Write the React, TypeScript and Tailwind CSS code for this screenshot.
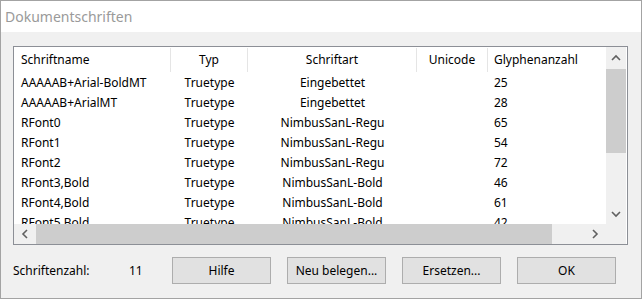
import React from 'react';

const rows = [
  ['AAAAAB+Arial-BoldMT', 'Truetype', 'Eingebettet', '', '25'],
  ['AAAAAB+ArialMT', 'Truetype', 'Eingebettet', '', '28'],
  ['RFont0', 'Truetype', 'NimbusSanL-Regu', '', '65'],
  ['RFont1', 'Truetype', 'NimbusSanL-Regu', '', '54'],
  ['RFont2', 'Truetype', 'NimbusSanL-Regu', '', '72'],
  ['RFont3,Bold', 'Truetype', 'NimbusSanL-Bold', '', '46'],
  ['RFont4,Bold', 'Truetype', 'NimbusSanL-Bold', '', '61'],
  ['RFont5,Bold', 'Truetype', 'NimbusSanL-Bold', '', '42'],
];

const Chevron = ({ dir }: { dir: 'up' | 'down' | 'left' | 'right' }) => {
  const d = {
    up: 'M1 6 L5 2 L9 6',
    down: 'M1 2 L5 6 L9 2',
    left: 'M6 1 L2 5 L6 9',
    right: 'M2 1 L6 5 L2 9',
  }[dir];
  const vertical = dir === 'up' || dir === 'down';
  return (
    <svg width={vertical ? 10 : 8} height={vertical ? 8 : 10} viewBox={vertical ? '0 0 10 8' : '0 0 8 10'}>
      <path d={d} fill="none" stroke="#606060" strokeWidth="1.6" />
    </svg>
  );
};

const Button = ({ label }: { label: string }) => (
  <button className="flex h-[27px] w-[99px] items-center justify-center border border-[#adadad] bg-[#e1e1e1] text-[12px] text-black">
    {label}
  </button>
);

const App = () => {
  return (
    <div className="flex h-[299px] w-[642px] flex-col border border-[#a3a3a3] bg-[#f0f0f0] font-['Noto_Sans',sans-serif] text-[12px] text-black">
      <div className="flex h-[31px] items-center bg-white pl-[4px] text-[14px] text-[#9a9a9a]">
        Dokumentschriften
      </div>

      <div className="pl-[12px] pr-[13px] pt-[14px]">
        <div className="flex h-[199px] w-[615px] border border-[#8c8f96] bg-white">
          <div className="flex w-[592px] flex-col">
            <div className="h-[177px] overflow-hidden">
              <div className="flex h-[26px] items-center">
                <div className="flex w-[156px] items-center pl-[7px]">Schriftname</div>
                <div className="h-[24px] w-px bg-[#e5e5e5]" />
                <div className="w-[76px] text-center">Typ</div>
                <div className="h-[24px] w-px bg-[#e5e5e5]" />
                <div className="w-[168px] text-center">Schriftart</div>
                <div className="h-[24px] w-px bg-[#e5e5e5]" />
                <div className="w-[70px] text-center">Unicode</div>
                <div className="h-[24px] w-px bg-[#e5e5e5]" />
                <div className="pl-[6px]">Glyphenanzahl</div>
              </div>
              {rows.map((r) => (
                <div key={r[0]} className="flex h-[20px] items-center">
                  <div className="w-[157px] pl-[7px]">{r[0]}</div>
                  <div className="w-[77px] text-center">{r[1]}</div>
                  <div className="w-[169px] text-center">{r[2]}</div>
                  <div className="w-[71px] text-center">{r[3]}</div>
                  <div className="pl-[6px]">{r[4]}</div>
                </div>
              ))}
            </div>
            <div className="flex h-[20px] bg-[#f0f0f0]">
              <div className="flex w-[22px] items-center justify-center">
                <Chevron dir="left" />
              </div>
              <div className="w-[516px] bg-[#cdcdcd]" />
              <div className="flex-1" />
              <div className="flex w-[22px] items-center justify-center">
                <Chevron dir="right" />
              </div>
            </div>
          </div>
          <div className="flex w-[20px] flex-col bg-[#f0f0f0]">
            <div className="flex h-[22px] items-center justify-center">
              <Chevron dir="up" />
            </div>
            <div className="h-[84px] bg-[#cdcdcd]" />
            <div className="flex-1" />
            <div className="flex h-[21px] items-center justify-center">
              <Chevron dir="down" />
            </div>
            <div className="h-[20px]" />
          </div>
        </div>
      </div>

      <div className="mt-[12px] flex items-center pl-[12px]">
        <div className="w-[116px]">Schriftenzahl:</div>
        <div className="w-[43px]">11</div>
        <div className="flex gap-[16px]">
          <Button label="Hilfe" />
          <Button label="Neu belegen..." />
          <Button label="Ersetzen..." />
          <Button label="OK" />
        </div>
      </div>
    </div>
  );
};

export default App;
